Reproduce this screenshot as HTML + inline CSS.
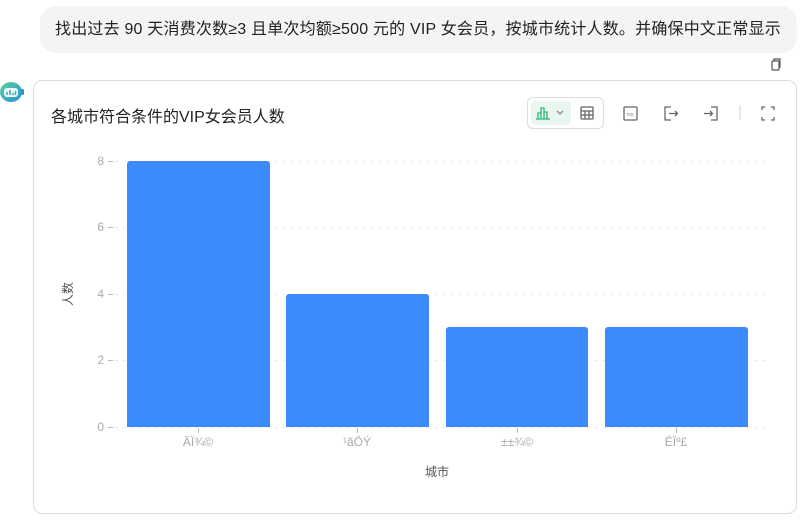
<!DOCTYPE html>
<html><head><meta charset="utf-8"><style>
*{margin:0;padding:0;box-sizing:border-box}
body{width:803px;height:520px;background:#fff;font-family:"Liberation Sans","Noto Sans CJK SC",sans-serif;position:relative;overflow:hidden}
.bubble{position:absolute;left:40px;top:6px;width:757px;height:47px;background:#f3f4f6;border-radius:16px;font-size:16px;letter-spacing:0.2px;color:#222;line-height:47px;padding-left:15px;white-space:nowrap}
.card{position:absolute;left:33px;top:80px;width:764px;height:434px;border:1px solid #dcdcdc;border-radius:9px;background:#fff}
.title{position:absolute;left:17px;top:22px;font-size:16px;color:#222}
</style></head><body>
<div class="bubble">找出过去 90 天消费次数≥3 且单次均额≥500 元的 VIP 女会员，按城市统计人数。并确保中文正常显示</div>
<svg style="position:absolute;left:769px;top:57px" width="14" height="14" viewBox="0 0 14 14" fill="none" stroke="#555" stroke-width="1.2"><rect x="3" y="4" width="7" height="9" rx="1"/><path d="M5 4V2h6v8h-1"/></svg>
<svg style="position:absolute;left:0;top:80px" width="24" height="24" viewBox="0 0 24 24"><defs><linearGradient id="g" x1="0" y1="0" x2="1" y2="1"><stop offset="0" stop-color="#5ad39a"/><stop offset="1" stop-color="#2a8fd6"/></linearGradient></defs><ellipse cx="11" cy="12" rx="11" ry="10" fill="url(#g)"/><rect x="21" y="9" width="3" height="6" rx="1.5" fill="#2a8fd6"/><rect x="4" y="8" width="14" height="9" rx="3" fill="#fff" opacity=".9"/><path d="M7 15v-3M10 15v-5M13 15v-2M15.5 15v-4" stroke="#3aa6c8" stroke-width="1.5"/></svg>
<div class="card">
<div class="title">各城市符合条件的VIP女会员人数</div>
<div style="position:absolute;left:493px;top:16px;width:77px;height:32px;border:1px solid #ddd;border-radius:6px"></div>
<div style="position:absolute;left:497px;top:20px;width:40px;height:24px;background:#e9f7f0;border-radius:4px"></div>
</div>
<svg style="position:absolute;left:530px;top:100px" width="270" height="30" viewBox="530 100 270 30" fill="none" stroke-width="1.3">
<path d="M536 119h14M538 119v-6h3v6M541 119v-11h3v11M544 119v-7h3v7" stroke="#2db57a"/>
<path d="M557 111l3 3 3-3" stroke="#888"/>
<rect x="581" y="107" width="12" height="12" rx="1" stroke="#666"/><path d="M581 111h12M581 115h12M585 111v8M589 111v8" stroke="#666"/>
<rect x="624" y="107" width="13" height="13" rx="1" stroke="#666"/><text x="626.5" y="115.5" font-size="4" fill="#666" stroke="none" font-family="Liberation Sans">SQL</text>
<path d="M671 107h-6v13h6M669 113.5h8M675 111l2.5 2.5-2.5 2.5" stroke="#666"/>
<path d="M711 107h6v13h-6M704 113.5h8M710 111l2.5 2.5-2.5 2.5" stroke="#666"/>
<path d="M740 105v15" stroke="#ddd"/>
<path d="M762 110v-3h3M771 107h3v3M774 117v3h-3M765 120h-3v-3" stroke="#666"/>
</svg>
<svg style="position:absolute;left:0;top:0" width="803" height="520">
<g stroke="#efefef" stroke-dasharray="4 4"><path d="M114 161.5H766M114 227.5H766M114 294.5H766M114 360.5H766M114 427.5H766"/></g>
<g stroke="#bbb"><path d="M108 161.5h5M108 227.5h5M108 294.5h5M108 360.5h5M108 427.5h5M198.5 428v5M357.5 428v5M517.5 428v5M676.5 428v5"/></g>
<g font-size="12" fill="#aaa" font-family="Liberation Sans" text-anchor="end"><text x="104" y="165">8</text><text x="104" y="231">6</text><text x="104" y="298">4</text><text x="104" y="364">2</text><text x="104" y="431">0</text></g>
<g fill="#3b8bfd"><path d="M127 427V164a3 3 0 0 1 3-3h137a3 3 0 0 1 3 3v263z"/><path d="M286 427V297a3 3 0 0 1 3-3h137a3 3 0 0 1 3 3v130z"/><path d="M446 427V330a3 3 0 0 1 3-3h136a3 3 0 0 1 3 3v97z"/><path d="M605 427V330a3 3 0 0 1 3-3h137a3 3 0 0 1 3 3v97z"/></g>
<g font-size="12" fill="#aaa" font-family="Liberation Sans" text-anchor="middle"><text x="198" y="446">ÄÏ¾©</text><text x="357" y="446">¹ãÖÝ</text><text x="517" y="446">±±¾©</text><text x="676" y="446">ÉÏº£</text></g>
<text x="437" y="476" font-size="12" fill="#555" text-anchor="middle" font-family="Noto Sans CJK SC">城市</text>
<text transform="translate(72,294) rotate(-90)" font-size="12" fill="#555" text-anchor="middle" font-family="Noto Sans CJK SC">人数</text>
</svg>
</body></html>
